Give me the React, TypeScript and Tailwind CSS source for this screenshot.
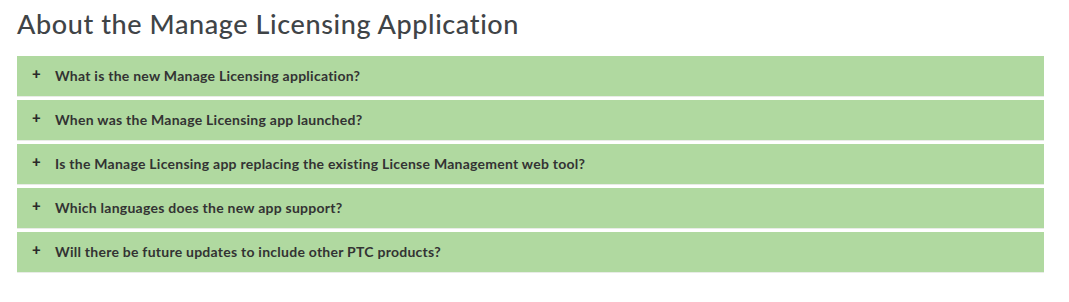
import React from 'react';

const questions = [
  'What is the new Manage Licensing application?',
  'When was the Manage Licensing app launched?',
  'Is the Manage Licensing app replacing the existing License Management web tool?',
  'Which languages does the new app support?',
  'Will there be future updates to include other PTC products?',
];

const App = () => {
  return (
    <div className="w-[1069px] h-[302px] bg-white px-[17px] pt-[7px] font-['Lato',sans-serif]">
      <h2 className="text-[27px] leading-[34px] font-medium text-[#3f4447] mb-[15px] tracking-[0.6px]">
        About the Manage Licensing Application
      </h2>
      <div className="w-[1027px] flex flex-col gap-[3px]">
        {questions.map((q) => (
          <div
            key={q}
            className="h-[41px] bg-[#b0d9a0] border-b border-[#e8ece6] flex items-center pl-[15px] font-bold text-[#333333]"
          >
            <span className="w-[23px] text-[15px] font-black leading-none -mt-[5px] text-[#2a2a2a]">+</span>
            <span className="text-[14px] tracking-[0.25px] -mt-[2px]">{q}</span>
          </div>
        ))}
      </div>
    </div>
  );
};

export default App;
